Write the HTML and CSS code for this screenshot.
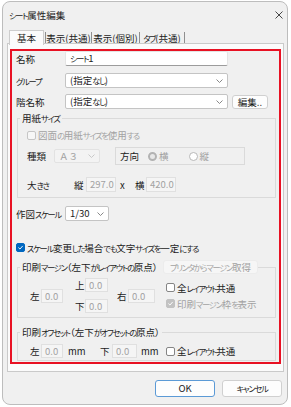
FILE: index.html
```html
<!DOCTYPE html>
<html lang="ja">
<head>
<meta charset="utf-8">
<title>シート属性編集</title>
<link rel="stylesheet" href="styles.css">
</head>
<body>
<div class="window">
  <div class="titlebar">
    <span class="title"><span class="k">シート</span>属性編集</span>
    <svg class="close" viewBox="0 0 8 8" width="8" height="8"><path d="M0.5 0.5L7.5 7.5M7.5 0.5L0.5 7.5" stroke="#333" stroke-width="0.9" fill="none"/></svg>
  </div>
  <div class="tabs">
    <div class="tab active">基本</div>
    <div class="tab t2">表示(共通)</div>
    <div class="tab t3">表示(個別)</div>
    <div class="tab t4"><span class="k">タブ</span>(共通)</div>
  </div>
  <div class="panel">
    <div class="form">
      <div class="row r1">
        <span class="lbl">名称</span>
        <div class="textbox"><span class="k">シート</span>1</div>
      </div>
      <div class="row r2">
        <span class="lbl"><span class="k">グループ</span></span>
        <div class="select wide"><span>(指定<span class="k">なし</span>)</span><svg class="chev" viewBox="0 0 7 4" width="7" height="4"><path d="M0.5 0.5L3.5 3.5L6.5 0.5" fill="none" stroke="#7a7a7a" stroke-width="0.9"/></svg></div>
      </div>
      <div class="row r3">
        <span class="lbl">階名称</span>
        <div class="select wide"><span>(指定<span class="k">なし</span>)</span><svg class="chev" viewBox="0 0 7 4" width="7" height="4"><path d="M0.5 0.5L3.5 3.5L6.5 0.5" fill="none" stroke="#7a7a7a" stroke-width="0.9"/></svg></div>
        <div class="btn edit">編集..</div>
      </div>

      <fieldset class="group g-paper">
        <legend>用紙<span class="k">サイズ</span></legend>
        <div class="check-row dis p-check"><span class="cb"></span><span>図面<span class="k">の</span>用紙<span class="k">サイズを</span>使用<span class="k">する</span></span></div>
        <div class="kind-row">
          <span class="lbl-k">種類</span>
          <div class="select dis a3"><span>Ａ３</span><svg class="chev" viewBox="0 0 7 4" width="7" height="4"><path d="M0.5 0.5L3.5 3.5L6.5 0.5" fill="none" stroke="#c4c4c4" stroke-width="0.9"/></svg></div>
          <div class="dir">
            <span class="dir-lbl">方向</span>
            <span class="radio on"></span><span class="rtxt">横</span>
            <span class="radio r-tate"></span><span class="rtxt">縦</span>
          </div>
        </div>
        <div class="size-row">
          <span class="lbl-s">大<span class="k">きさ</span></span>
          <span class="s-tate">縦</span>
          <div class="num dis w30">297.0</div>
          <span class="times">x</span>
          <span class="s-yoko">横</span>
          <div class="num dis w30">420.0</div>
        </div>
      </fieldset>

      <div class="row r-scale">
        <span class="lbl">作図<span class="k">スケール</span></span>
        <div class="select scale"><span>1/30</span><svg class="chev" viewBox="0 0 7 4" width="7" height="4"><path d="M0.5 0.5L3.5 3.5L6.5 0.5" fill="none" stroke="#7a7a7a" stroke-width="0.9"/></svg></div>
      </div>

      <div class="check-row fix-row"><span class="cb checked"><svg viewBox="0 0 9 9" width="9" height="9"><path d="M1.8 4.6L3.8 6.5L7.3 2.5" stroke="#fff" stroke-width="1.2" fill="none"/></svg></span><span><span class="k">スケール</span>変更<span class="k">した</span>場合<span class="k">でも</span>文字<span class="k">サイズを</span>一定<span class="k">にする</span></span></div>

      <fieldset class="group g-margin">
        <legend class="leg-btn"><span>印刷<span class="k">マージン</span>（左下<span class="k">がレイアウトの</span>原点）</span><span class="btn dis printer"><span class="k">プリンタからマージン</span>取得</span></legend>
        <div class="margin-grid">
          <div class="m-col c-left"><span class="ml">左</span><div class="num dis w22">0.0</div></div>
          <div class="m-col2">
            <div class="m-pair"><span class="ml2">上</span><div class="num dis w23">0.0</div></div>
            <div class="m-pair"><span class="ml2">下</span><div class="num dis w23">0.0</div></div>
          </div>
          <div class="m-col c-right"><span class="ml">右</span><div class="num dis w27">0.0</div></div>
          <div class="m-checks">
            <div class="check-row"><span class="cb"></span><span>全<span class="k">レイアウト</span>共通</span></div>
            <div class="check-row dis"><span class="cb checked-dis"><svg viewBox="0 0 9 9" width="9" height="9"><path d="M1.8 4.6L3.8 6.5L7.3 2.5" stroke="#fff" stroke-width="1.2" fill="none"/></svg></span><span>印刷<span class="k">マージン</span>枠<span class="k">を</span>表示</span></div>
          </div>
        </div>
      </fieldset>

      <fieldset class="group g-offset">
        <legend>印刷<span class="k">オフセット</span>（左下<span class="k">がオフセットの</span>原点）</legend>
        <div class="offset-row">
          <span class="ml">左</span><div class="num dis w22">0.0</div>
          <span class="mm">mm</span>
          <span class="ol">下</span><div class="num dis w25">0.0</div>
          <span class="mm mm2">mm</span>
          <div class="check-row o-check"><span class="cb"></span><span>全<span class="k">レイアウト</span>共通</span></div>
        </div>
      </fieldset>
    </div>
  </div>
  <div class="footer">
    <div class="btn fbtn ok">OK</div>
    <div class="btn fbtn"><span class="k">キャンセル</span></div>
  </div>
</div>
</body>
</html>
```

FILE: styles.css
```css
* { box-sizing: border-box; margin: 0; padding: 0; }

body {
  margin: 0;
  background: #ffffff;
  font-family: "Noto Sans CJK JP", "Noto Sans", sans-serif;
  font-size: 9.5px;
  line-height: 12px;
  color: #1b1b1b;
  font-feature-settings: "palt";
}

.k {
  font-size: 8.2px;
  letter-spacing: -1.2px;
}

.window {
  margin: 1px 0 0 2px;
  width: 286px;
  height: 404px;
  border: 1px solid #bdbdbd;
  border-radius: 8px;
  background: #f0f0f0;
  display: flex;
  flex-direction: column;
  overflow: hidden;
}

.titlebar {
  height: 25px;
  display: flex;
  align-items: center;
  justify-content: space-between;
  padding: 0 4px 0 6px;
  color: #222;
}

.close { display: block; }

.tabs {
  display: flex;
  align-items: flex-end;
  margin: 3px 0 0 6px;
  height: 14px;
}

.tab {
  height: 12px;
  line-height: 12px;
  text-align: center;
  border-right: 1px solid #8f8f8f;
  white-space: nowrap;
}

.tab.active {
  width: 35px;
  height: 15px;
  line-height: 14px;
  border: 1px solid #cdcdcd;
  border-bottom: none;
  background: #fbfbfb;
  margin-bottom: -1px;
  position: relative;
  z-index: 1;
}

.tab.t2 { width: 47px; margin-left: 1px; border-left: 1px solid #8f8f8f; }
.tab.t3 { width: 48px; }
.tab.t4 { width: 45px; }

.panel {
  margin: -1px 0 0 4px;
  width: 277px;
  height: 329px;
  border: 1px solid #cacaca;
  background: #fbfbfb;
  padding: 5px 0 0 2px;
}

.form {
  width: 271px;
  height: 315px;
  border: 2px solid #e81123;
  background: #f0f0f0;
  padding: 0 0 0 4px;
}

.row {
  display: flex;
  align-items: center;
  height: 15px;
}

.r2 { margin-top: 7px; }
.r3 { margin-top: 6px; }

.lbl { width: 49px; flex: none; white-space: nowrap; }

.textbox {
  width: 163px;
  height: 15px;
  background: #fff;
  border: 1px solid #e4e4e4;
  border-bottom-color: #9c9c9c;
  border-radius: 2px;
  padding-left: 4px;
  line-height: 13px;
}

.select {
  display: flex;
  align-items: center;
  justify-content: space-between;
  height: 15px;
  background: #fff;
  border: 1px solid #c4c4c4;
  border-radius: 2px;
  padding: 0 4px 0 4px;
  line-height: 13px;
  white-space: nowrap;
}

.select.wide { width: 163px; }
.select.scale { width: 44px; }

.chev { display: block; flex: none; }

.btn {
  background: #fdfdfd;
  border: 1px solid #d0d0d0;
  border-radius: 3px;
  text-align: center;
  white-space: nowrap;
}

.btn.edit {
  width: 36px;
  height: 14px;
  line-height: 12px;
  margin-left: 4px;
}

.group {
  border: 1px solid #dadada;
  margin-left: 1px;
  width: 259px;
}

.group legend {
  margin-left: 2px;
  padding: 0 2px;
  height: 12px;
  line-height: 12px;
  white-space: nowrap;
}

.g-paper {
  margin-top: 3px;
  padding: 0 0 5px 0;
}

.g-paper > div { margin-left: 9px; }

.check-row {
  display: flex;
  align-items: center;
  height: 11px;
  white-space: nowrap;
}

.cb {
  width: 9px;
  height: 9px;
  flex: none;
  border: 1px solid #858585;
  border-radius: 2px;
  background: #fff;
  margin-right: 2px;
  display: flex;
  align-items: center;
  justify-content: center;
}

.cb svg { display: block; }

.cb.checked { background: #0067c0; border-color: #0067c0; }
.cb.checked-dis { background: #c2c2c2; border-color: #c2c2c2; }

.dis { color: #a2a2a2; }
.check-row.dis .cb { border-color: #c6c6c6; background: #f7f7f7; }
.check-row.dis .cb.checked-dis { background: #c2c2c2; border-color: #c2c2c2; }

.p-check { margin-top: 5px; height: 12px; }

.kind-row {
  display: flex;
  align-items: center;
  height: 18px;
  margin-top: 6px;
}

.lbl-k { width: 27px; flex: none; }

.select.dis {
  background: #f3f3f3;
  border-color: #e2e2e2;
}

.select.a3 { width: 46px; height: 14px; font-feature-settings: normal; }

.dir {
  display: flex;
  align-items: center;
  width: 130px;
  height: 18px;
  margin-left: 15px;
  border: 1px solid #dadada;
  padding-left: 4px;
}

.dir-lbl { width: 28px; flex: none; }

.radio {
  width: 9px;
  height: 9px;
  flex: none;
  border-radius: 50%;
  border: 1px solid #b8b8b8;
  background: #fff;
  margin-right: 2px;
}

.radio.on {
  border: 2.5px solid #b3b3b3;
  background: #e8e8e8;
}

.radio.r-tate { margin-left: 20px; }

.rtxt { color: #a2a2a2; }

.size-row {
  display: flex;
  align-items: center;
  height: 15px;
  margin-top: 12px;
}

.lbl-s { width: 47px; flex: none; }
.s-tate { width: 12px; flex: none; }
.times { margin-left: 4px; width: 15px; flex: none; }
.s-yoko { width: 11px; flex: none; }

.num {
  height: 15px;
  flex: none;
  border: 1px solid #e0e0e0;
  background: #f5f5f5;
  padding-left: 3px;
  line-height: 13px;
}

.num.w22 { width: 22px; height: 14px; line-height: 12px; }
.num.w23 { width: 23px; height: 14px; line-height: 12px; }
.num.w25 { width: 25px; height: 14px; line-height: 12px; }
.num.w27 { width: 27px; height: 14px; line-height: 12px; }
.num.w30 { width: 30px; }

.r-scale { margin-top: 8px; }

.fix-row { margin-top: 21px; }

.g-margin {
  margin-top: 7px;
  padding: 4px 0 4px 0;
}

.group legend.leg-btn {
  display: flex;
  align-items: center;
  justify-content: space-between;
  width: 238px;
  height: 14px;
  padding: 0 0 0 2px;
}

.btn.printer {
  width: 95px;
  height: 14px;
  line-height: 12px;
  background: #f6f6f6;
  border-color: #ececec;
}

.margin-grid {
  display: flex;
  align-items: center;
  padding-left: 12px;
}

.m-col { display: flex; align-items: center; }

.ml { width: 11px; flex: none; }
.ml2 { width: 10px; flex: none; }

.m-col2 {
  display: flex;
  flex-direction: column;
  gap: 7px;
  margin-left: 12px;
}

.m-pair { display: flex; align-items: center; }

.c-right { margin-left: 9px; }

.m-checks {
  align-self: flex-start;
  margin-top: 4px;
  margin-left: 11px;
  display: flex;
  flex-direction: column;
  gap: 5px;
}

.m-checks .check-row { height: 11px; }

.g-offset {
  margin-top: 8px;
  padding: 6px 0 2px 0;
}

.offset-row {
  display: flex;
  align-items: center;
  height: 14px;
  padding-left: 12px;
}

.mm { width: 16px; flex: none; margin-left: 5px; }
.mm2 { margin-left: 4px; }
.ol { width: 12px; flex: none; margin-left: 16px; }
.o-check { margin-left: 9px; }

.footer {
  display: flex;
  justify-content: flex-end;
  gap: 7px;
  margin-top: 8px;
  padding-right: 5px;
}

.btn.fbtn {
  width: 60px;
  height: 17px;
  line-height: 15px;
}

.btn.ok { border-color: #5b9ad6; }
```
